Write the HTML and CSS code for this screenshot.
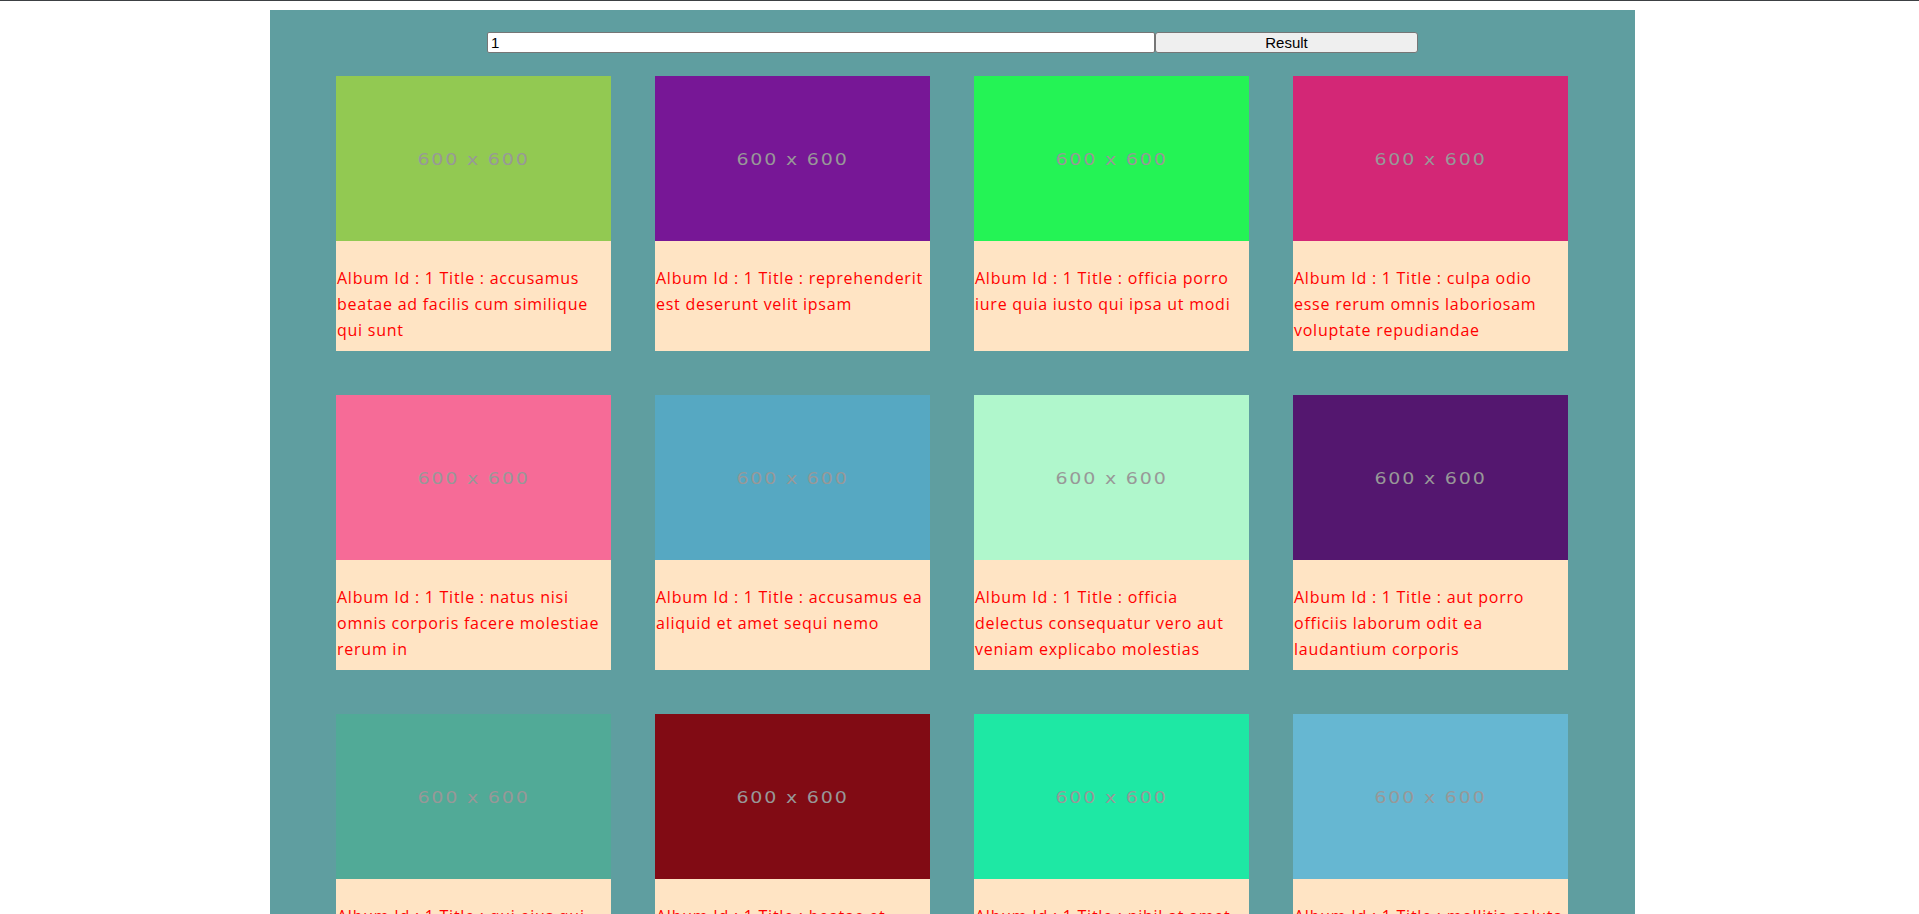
FILE: index.html
```html
<!DOCTYPE html>
<html lang="en">
<head>
<meta charset="utf-8">
<title>Album</title>
<link rel="stylesheet" href="styles.css">
</head>
<body>
<div class="page">
  <main class="panel">
    <form class="search">
      <input class="search-input" type="text" value="1">
      <button class="search-btn" type="button">Result</button>
    </form>
    <section class="grid">
      <div class="card"><div class="thumb" style="background:#92c952"><span>600 x 600</span></div><p class="caption">Album Id : 1 Title : accusamus beatae ad facilis cum similique qui sunt</p></div>
      <div class="card"><div class="thumb" style="background:#771796"><span>600 x 600</span></div><p class="caption">Album Id : 1 Title : reprehenderit est deserunt velit ipsam</p></div>
      <div class="card"><div class="thumb" style="background:#24f355"><span>600 x 600</span></div><p class="caption">Album Id : 1 Title : officia porro iure quia iusto qui ipsa ut modi</p></div>
      <div class="card"><div class="thumb" style="background:#d32776"><span>600 x 600</span></div><p class="caption">Album Id : 1 Title : culpa odio esse rerum omnis laboriosam voluptate repudiandae</p></div>
      <div class="card"><div class="thumb" style="background:#f66b97"><span>600 x 600</span></div><p class="caption">Album Id : 1 Title : natus nisi omnis corporis facere molestiae rerum in</p></div>
      <div class="card"><div class="thumb" style="background:#56a8c2"><span>600 x 600</span></div><p class="caption">Album Id : 1 Title : accusamus ea aliquid et amet sequi nemo</p></div>
      <div class="card"><div class="thumb" style="background:#b0f7cc"><span>600 x 600</span></div><p class="caption">Album Id : 1 Title : officia delectus consequatur vero aut veniam explicabo molestias</p></div>
      <div class="card"><div class="thumb" style="background:#54176f"><span>600 x 600</span></div><p class="caption">Album Id : 1 Title : aut porro officiis laborum odit ea laudantium corporis</p></div>
      <div class="card"><div class="thumb" style="background:#51aa97"><span>600 x 600</span></div><p class="caption">Album Id : 1 Title : qui eius qui autem sed</p></div>
      <div class="card"><div class="thumb" style="background:#810b14"><span>600 x 600</span></div><p class="caption">Album Id : 1 Title : beatae et provident et ut vel</p></div>
      <div class="card"><div class="thumb" style="background:#1ee8a4"><span>600 x 600</span></div><p class="caption">Album Id : 1 Title : nihil at amet non hic quia qui</p></div>
      <div class="card"><div class="thumb" style="background:#66b7d2"><span>600 x 600</span></div><p class="caption">Album Id : 1 Title : mollitia soluta ut rerum eos aliquam consequatur perspiciatis maiores</p></div>
      <div class="card"><div class="thumb" style="background:#197d29"><span>600 x 600</span></div><p class="caption">Album Id : 1 Title : repudiandae iusto deleniti rerum</p></div>
      <div class="card"><div class="thumb" style="background:#061a65"><span>600 x 600</span></div><p class="caption">Album Id : 1 Title : est necessitatibus architecto ut laborum</p></div>
      <div class="card"><div class="thumb" style="background:#f9cee5"><span>600 x 600</span></div><p class="caption">Album Id : 1 Title : harum dicta fuga ut omnis non consequatur</p></div>
      <div class="card"><div class="thumb" style="background:#fdf73e"><span>600 x 600</span></div><p class="caption">Album Id : 1 Title : in non voluptatibus nostrum eligendi</p></div>
      <div class="card"><div class="thumb" style="background:#9c184f"><span>600 x 600</span></div><p class="caption">Album Id : 1 Title : natus doloribus necessitatibus ipsa</p></div>
      <div class="card"><div class="thumb" style="background:#1fe46f"><span>600 x 600</span></div><p class="caption">Album Id : 1 Title : laboriosam odit nam necessitatibus et illum dolores reiciendis</p></div>
      <div class="card"><div class="thumb" style="background:#56acb2"><span>600 x 600</span></div><p class="caption">Album Id : 1 Title : perferendis nesciunt eveniet et optio a</p></div>
      <div class="card"><div class="thumb" style="background:#8985dc"><span>600 x 600</span></div><p class="caption">Album Id : 1 Title : assumenda voluptatem laboriosam enim consequatur veniam placeat</p></div>
      <div class="card"><div class="thumb" style="background:#5e12c6"><span>600 x 600</span></div><p class="caption">Album Id : 1 Title : ad et natus qui</p></div>
      <div class="card"><div class="thumb" style="background:#45601a"><span>600 x 600</span></div><p class="caption">Album Id : 1 Title : et ea illo et sit voluptas animi blanditiis porro</p></div>
      <div class="card"><div class="thumb" style="background:#e924e6"><span>600 x 600</span></div><p class="caption">Album Id : 1 Title : harum velit vero totam</p></div>
      <div class="card"><div class="thumb" style="background:#8f209a"><span>600 x 600</span></div><p class="caption">Album Id : 1 Title : beatae officiis ut aut</p></div>
      <div class="card"><div class="thumb" style="background:#5e3a73"><span>600 x 600</span></div><p class="caption">Album Id : 1 Title : facere non quis fuga fugit vitae</p></div>
      <div class="card"><div class="thumb" style="background:#474645"><span>600 x 600</span></div><p class="caption">Album Id : 1 Title : asperiores nobis voluptate qui</p></div>
      <div class="card"><div class="thumb" style="background:#c969a1"><span>600 x 600</span></div><p class="caption">Album Id : 1 Title : sit asperiores est quos quis nisi veniam error</p></div>
      <div class="card"><div class="thumb" style="background:#4d564d"><span>600 x 600</span></div><p class="caption">Album Id : 1 Title : non neque eligendi molestiae repudiandae illum</p></div>
      <div class="card"><div class="thumb" style="background:#ea51da"><span>600 x 600</span></div><p class="caption">Album Id : 1 Title : aut ipsam quos ab placeat omnis</p></div>
      <div class="card"><div class="thumb" style="background:#4f5b8d"><span>600 x 600</span></div><p class="caption">Album Id : 1 Title : odio enim voluptatem quidem aut nihil illum</p></div>
      <div class="card"><div class="thumb" style="background:#b7e2ae"><span>600 x 600</span></div><p class="caption">Album Id : 1 Title : voluptate voluptates sequi</p></div>
      <div class="card"><div class="thumb" style="background:#3a2f8b"><span>600 x 600</span></div><p class="caption">Album Id : 1 Title : ad enim dignissimos voluptatem similique</p></div>
      <div class="card"><div class="thumb" style="background:#e39a44"><span>600 x 600</span></div><p class="caption">Album Id : 1 Title : culpa ipsam nobis qui fuga magni et mollitia</p></div>
      <div class="card"><div class="thumb" style="background:#2c7b5e"><span>600 x 600</span></div><p class="caption">Album Id : 1 Title : vitae est facere quia itaque adipisci perferendis</p></div>
      <div class="card"><div class="thumb" style="background:#a81f3d"><span>600 x 600</span></div><p class="caption">Album Id : 1 Title : tenetur minus voluptatum et</p></div>
      <div class="card"><div class="thumb" style="background:#6fc1e8"><span>600 x 600</span></div><p class="caption">Album Id : 1 Title : expedita rerum eaque</p></div>
      <div class="card"><div class="thumb" style="background:#d4e04b"><span>600 x 600</span></div><p class="caption">Album Id : 1 Title : totam voluptas iusto deserunt dolores</p></div>
      <div class="card"><div class="thumb" style="background:#3e1a6d"><span>600 x 600</span></div><p class="caption">Album Id : 1 Title : natus magnam iure rerum pariatur molestias</p></div>
      <div class="card"><div class="thumb" style="background:#f2759c"><span>600 x 600</span></div><p class="caption">Album Id : 1 Title : molestiae nam ullam et rerum doloribus</p></div>
      <div class="card"><div class="thumb" style="background:#1c9d72"><span>600 x 600</span></div><p class="caption">Album Id : 1 Title : est quas voluptates dignissimos sint praesentium</p></div>
      <div class="card"><div class="thumb" style="background:#8b4cb6"><span>600 x 600</span></div><p class="caption">Album Id : 1 Title : in voluptatem doloremque cum atque architecto</p></div>
      <div class="card"><div class="thumb" style="background:#5aa02c"><span>600 x 600</span></div><p class="caption">Album Id : 1 Title : voluptatibus a autem molestias voluptas</p></div>
      <div class="card"><div class="thumb" style="background:#c2410f"><span>600 x 600</span></div><p class="caption">Album Id : 1 Title : eius beatae quam eveniet eos</p></div>
      <div class="card"><div class="thumb" style="background:#2a6db8"><span>600 x 600</span></div><p class="caption">Album Id : 1 Title : quisquam quia sunt ipsam consectetur</p></div>
      <div class="card"><div class="thumb" style="background:#e8b3d1"><span>600 x 600</span></div><p class="caption">Album Id : 1 Title : sunt repellendus corporis pariatur</p></div>
      <div class="card"><div class="thumb" style="background:#71592e"><span>600 x 600</span></div><p class="caption">Album Id : 1 Title : voluptatibus ducimus consequuntur nostrum</p></div>
      <div class="card"><div class="thumb" style="background:#30e0c4"><span>600 x 600</span></div><p class="caption">Album Id : 1 Title : officiis aspernatur tempora dolores</p></div>
      <div class="card"><div class="thumb" style="background:#b01e7a"><span>600 x 600</span></div><p class="caption">Album Id : 1 Title : quia aut id eveniet sed</p></div>
      <div class="card"><div class="thumb" style="background:#9fd94e"><span>600 x 600</span></div><p class="caption">Album Id : 1 Title : et debitis molestias est velit</p></div>
      <div class="card"><div class="thumb" style="background:#4a3b91"><span>600 x 600</span></div><p class="caption">Album Id : 1 Title : error magni fugiat dolorem impedit molestiae</p></div>
    </section>
  </main>
</div>
</body>
</html>
```

FILE: styles.css
```css
html, body {
  margin: 0;
  padding: 0;
}

body {
  background: #ffffff;
  border-top: 1px solid #3c4043;
  font-family: "Open Sans", "Noto Sans", sans-serif;
}

.page {
  padding: 9px 0 0 270px;
}

.panel {
  width: 1365px;
  background: #5f9ea0;
  padding: 22px 0 44px;
}

.search {
  display: flex;
  margin: 0;
  padding-left: 217px;
}

.search-input {
  box-sizing: border-box;
  width: 668px;
  height: 21px;
  margin: 0;
  padding: 1px 3px;
  border: 1px solid #767676;
  border-radius: 2px;
  background: #ffffff;
  font-family: "Liberation Sans", Arial, sans-serif;
  font-size: 15px;
  color: #000000;
}

.search-btn {
  box-sizing: border-box;
  width: 263px;
  height: 21px;
  margin: 0;
  padding: 0;
  border: 1px solid #767676;
  border-radius: 3px;
  background: #efefef;
  font-family: "Liberation Sans", Arial, sans-serif;
  font-size: 15px;
  color: #000000;
}

.grid {
  display: grid;
  grid-template-columns: repeat(4, 275px);
  gap: 44px;
  justify-content: start;
  margin-top: 23px;
  padding-left: 66px;
}

.card {
  display: flex;
  flex-direction: column;
  height: 275px;
}

.thumb {
  height: 165px;
  display: flex;
  align-items: center;
  justify-content: center;
}

.thumb span {
  display: inline-block;
  font-family: "DejaVu Sans", Verdana, sans-serif;
  font-size: 19px;
  letter-spacing: 1.8px;
  color: #989898;
  transform: scaleY(0.8);
  padding-top: 2px;
}

.caption {
  flex: 1;
  margin: 0;
  padding: 24px 0 0 1px;
  background: #ffe4c4;
  color: #ff0000;
  font-size: 16px;
  letter-spacing: 0.75px;
  line-height: 26px;
  overflow: hidden;
}
```
